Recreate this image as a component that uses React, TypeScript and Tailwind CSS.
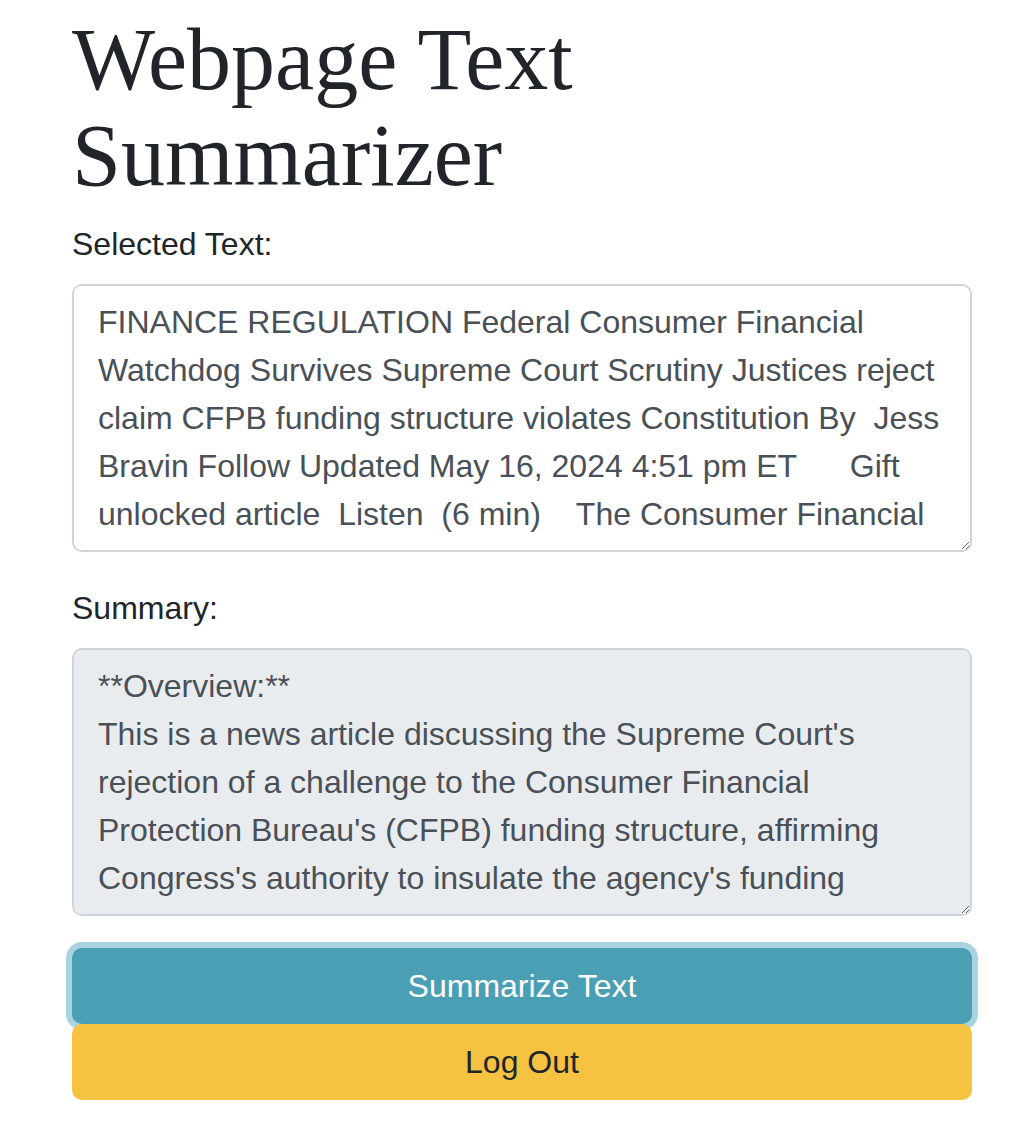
import React from "react";

const selectedText =
  "FINANCE REGULATION Federal Consumer Financial Watchdog Survives Supreme Court Scrutiny Justices reject claim CFPB funding structure violates Constitution By  Jess Bravin Follow Updated May 16, 2024 4:51 pm ET      Gift unlocked article  Listen  (6 min)    The Consumer Financial Protection Bureau can continue to operate under its current funding structure, the Supreme Court ruled Thursday.";

const summaryText =
  "**Overview:**\nThis is a news article discussing the Supreme Court's rejection of a challenge to the Consumer Financial Protection Bureau's (CFPB) funding structure, affirming Congress's authority to insulate the agency's funding source from political interference.";

const App: React.FC = () => {
  return (
    <div className="min-h-[1130px] bg-white pl-[72px] pt-[12px] font-['Liberation_Sans',Arial,sans-serif] text-[#212529]">
      <div className="flex w-[900px] flex-col">
        <h1 className="mb-[16px] font-['Liberation_Serif',Georgia,serif] text-[88px] leading-[96px] font-normal">
          Webpage Text
          <br />
          Summarizer
        </h1>

        <label className="mb-[16px] text-[32px] leading-[48px]">
          Selected Text:
        </label>
        <textarea
          readOnly
          defaultValue={selectedText}
          className="mb-[32px] h-[268px] w-full rounded-[10px] border-2 border-[#ced4da] bg-white px-[24px] py-[12px] text-[32px] leading-[48px] text-[#495057] outline-none [scrollbar-width:none]"
        />

        <label className="mb-[16px] text-[32px] leading-[48px]">Summary:</label>
        <textarea
          readOnly
          defaultValue={summaryText}
          className="mb-[32px] h-[268px] w-full rounded-[10px] border-2 border-[#ced4da] bg-[#e9ecef] px-[24px] py-[12px] text-[32px] leading-[48px] text-[#495057] outline-none [scrollbar-width:none]"
        />

        <button className="block h-[76px] w-full rounded-[10px] bg-[#4a9fb5] text-[32px] leading-[48px] text-white ring-[6px] ring-[#a8d3df]">
          Summarize Text
        </button>
        <button className="block h-[76px] w-full rounded-[10px] bg-[#f5c242] text-[32px] leading-[48px] text-[#212529]">
          Log Out
        </button>
      </div>
    </div>
  );
};

export default App;
